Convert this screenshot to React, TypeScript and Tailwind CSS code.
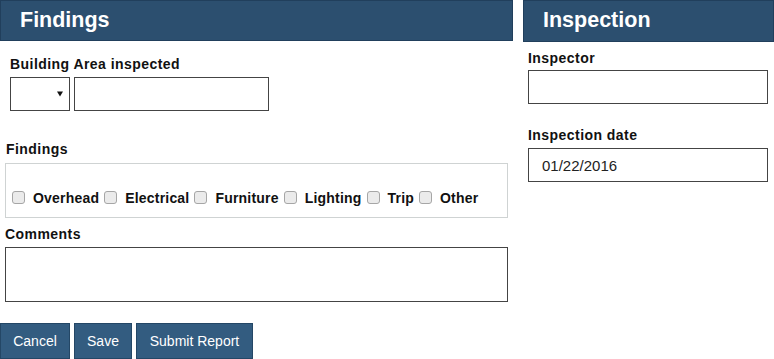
import { useState } from 'react';

const findingTypes = ['Overhead', 'Electrical', 'Furniture', 'Lighting', 'Trip', 'Other'];

const buttons = [
    { label: 'Cancel', width: 'w-[70px]' },
    { label: 'Save', width: 'w-[58px]' },
    { label: 'Submit Report', width: 'w-[117px]' },
];

const font = { fontFamily: '"Liberation Sans", Arial, sans-serif' };

function SectionHeader({ title }: { title: string }) {
    return (
        <div className="h-[42px] flex items-center px-[19px] bg-[#2c4f6f] border border-[#213f5c] text-white text-[21.5px] font-bold leading-none">
            {title}
        </div>
    );
}

function Label({ children, className = '' }: { children: React.ReactNode; className?: string }) {
    return (
        <div className={`text-[14px] font-bold leading-[16px] tracking-[0.45px] text-[#111] ${className}`}>
            {children}
        </div>
    );
}

export default function App() {
    const [checked, setChecked] = useState<Record<string, boolean>>({});
    const [date, setDate] = useState('01/22/2016');

    return (
        <div className="w-[774px] h-[359px] overflow-hidden bg-white flex gap-[10px]" style={font}>
            {/* Findings column */}
            <div className="w-[513px] flex flex-col">
                <SectionHeader title="Findings" />

                <Label className="mt-[15px] ml-[10px]">Building Area inspected</Label>
                <div className="flex gap-[4px] mt-[5px] ml-[10px]">
                    <div className="relative">
                        <select className="appearance-none w-[60px] h-[34px] border border-[#444] bg-white rounded-none outline-none" />
                        <svg className="absolute left-[47px] top-[14px] pointer-events-none" width="6" height="6" viewBox="0 0 6 6">
                            <path d="M0 0.5h6L3 5.5z" fill="#111" />
                        </svg>
                    </div>
                    <input className="w-[195px] h-[34px] border border-[#444] outline-none px-2" />
                </div>

                <Label className="mt-[30px] ml-[6px]">Findings</Label>
                <div className="mt-[6px] ml-[5px] w-[503px] h-[55px] border border-[#cfd3d3] flex items-end pb-[11px] pl-[6px]">
                    {findingTypes.map((type) => (
                        <label key={type} className="flex items-center">
                            <input
                                type="checkbox"
                                checked={!!checked[type]}
                                onChange={(e) => setChecked({ ...checked, [type]: e.target.checked })}
                                className="appearance-none w-[13px] h-[13px] border border-[#a6a6a6] rounded-[3px] bg-[#ebebeb] checked:bg-[#2c4f6f]"
                            />
                            <span className="ml-[8px] mr-[5px] text-[14px] font-bold tracking-[0.2px] text-[#111] leading-[16px]">
                                {type}
                            </span>
                        </label>
                    ))}
                </div>

                <Label className="mt-[8px] ml-[5px]">Comments</Label>
                <textarea className="mt-[5px] ml-[5px] w-[503px] h-[56px] border border-[#444] outline-none resize-none" />

                <div className="flex gap-[4px] mt-[21px]">
                    {buttons.map((b) => (
                        <button
                            key={b.label}
                            className={`${b.width} h-[36px] bg-[#335c80] border border-[#244766] text-white text-[14px] leading-none`}
                        >
                            {b.label}
                        </button>
                    ))}
                </div>
            </div>

            {/* Inspection column */}
            <div className="w-[251px] flex flex-col">
                <SectionHeader title="Inspection" />

                <Label className="mt-[8px] ml-[5px]">Inspector</Label>
                <input className="mt-[4px] ml-[5px] w-[240px] h-[34px] border border-[#444] outline-none px-[13px]" />

                <Label className="mt-[23px] ml-[5px]">Inspection date</Label>
                <input
                    value={date}
                    onChange={(e) => setDate(e.target.value)}
                    className="mt-[5px] ml-[5px] w-[240px] h-[34px] border border-[#444] outline-none px-[13px] text-[15px] text-[#222]"
                />
            </div>
        </div>
    );
}
